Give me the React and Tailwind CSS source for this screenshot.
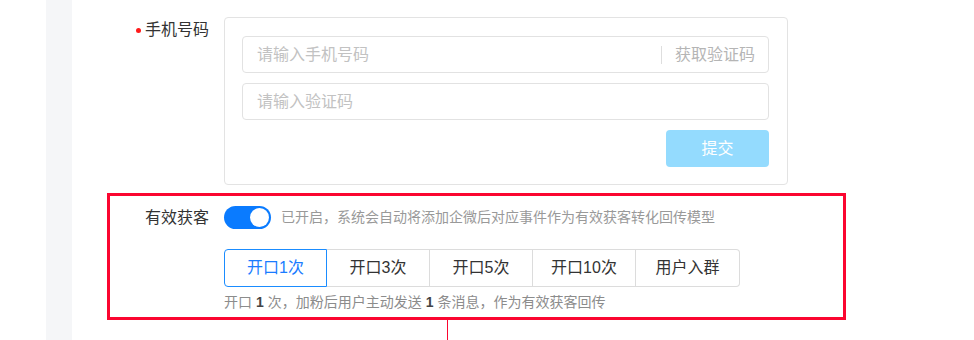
import React from "react";

const WM = "gyuliuyan".repeat(12);

function Watermark() {
  const tops = ["top-[11px]", "top-[80px]", "top-[149px]", "top-[217px]", "top-[285px]"];
  return (
    <div className="pointer-events-none absolute inset-0 overflow-hidden">
      {tops.map((t) => (
        <div
          key={t}
          className={`absolute left-0 ${t} whitespace-nowrap text-[32px] leading-[32px] text-black/[0.018] font-['Liberation_Sans',sans-serif]`}
        >
          {WM}
        </div>
      ))}
    </div>
  );
}

function Toggle() {
  return (
    <div className="flex h-[23px] w-[47px] items-center justify-end rounded-full bg-[#0a7bff] px-[2px]">
      <div className="h-[19px] w-[19px] rounded-full bg-white" />
    </div>
  );
}

const options = ["开口1次", "开口3次", "开口5次", "开口10次", "用户入群"];

export default function App() {
  return (
    <div className="relative flex h-[340px] w-[974px] overflow-hidden bg-white font-['Liberation_Sans','Noto_Sans_CJK_SC',sans-serif] text-[#333]">
      <div className="w-[46px] shrink-0" />
      <div className="w-[26px] shrink-0 bg-[#f5f6f8]" />
      <div className="flex flex-col pt-[17px]">
        {/* phone row */}
        <div className="flex">
          <div className="flex h-[26px] w-[137px] items-center justify-end gap-[4px] text-[16px]">
            <span className="h-[5px] w-[5px] rounded-full bg-[#ff1a1a]" />
            <span>手机号码</span>
          </div>
          <div className="ml-[15px] flex h-[168px] w-[564px] flex-col gap-[10px] rounded-[4px] border border-[#e3e3e3] pb-[17px] pl-[17px] pr-[18px] pt-[18px]">
            <div className="flex h-[37px] items-center rounded-[4px] border border-[#e2e2e2] pl-[14px] pr-[13px] text-[16px]">
              <span className="flex-1 text-[#c2c2c2]">请输入手机号码</span>
              <span className="h-[18px] w-px bg-[#dedede]" />
              <span className="ml-[13px] text-[#b5b5b5]">获取验证码</span>
            </div>
            <div className="flex h-[37px] items-center rounded-[4px] border border-[#e2e2e2] pl-[14px] text-[16px] text-[#c2c2c2]">
              请输入验证码
            </div>
            <div className="flex justify-end">
              <div className="flex h-[37px] w-[103px] items-center justify-center rounded-[4px] bg-[#94dbfe] text-[16px] text-white">
                提交
              </div>
            </div>
          </div>
        </div>

        {/* highlighted row */}
        <div className="ml-[35px] mt-[8px] h-[130px] w-[739px] border-[3px] border-[#fb0630] pt-[10px]">
          <div className="flex">
            <div className="flex h-[23px] w-[99px] items-center justify-end text-[16px]">有效获客</div>
            <div className="ml-[15px] flex flex-col">
              <div className="flex items-center gap-[10px]">
                <Toggle />
                <span className="text-[14px] text-[#999]">
                  已开启，系统会自动将添加企微后对应事件作为有效获客转化回传模型
                </span>
              </div>
              <div className="mt-[20px] flex h-[38px]">
                {options.map((o, i) => (
                  <div
                    key={o}
                    className={
                      i === 0
                        ? "flex w-[103px] items-center justify-center rounded-l-[4px] border border-[#1a8cff] text-[16px] text-[#1a7cff]"
                        : i === options.length - 1
                        ? "flex w-[104px] items-center justify-center rounded-r-[4px] border border-l-0 border-[#dcdcdc] text-[16px]"
                        : "flex w-[103px] items-center justify-center border border-l-0 border-[#dcdcdc] text-[16px]"
                    }
                  >
                    {o}
                  </div>
                ))}
              </div>
              <div className="mt-[5px] flex text-[14px] leading-[20px] text-[#8c8c8c]">
                <span>开口</span>
                <b className="mx-[4px] font-bold text-[#444]">1</b>
                <span>次，加粉后用户主动发送</span>
                <b className="mx-[4px] font-bold text-[#444]">1</b>
                <span>条消息，作为有效获客回传</span>
              </div>
            </div>
          </div>
        </div>
        <div className="ml-[375px] h-[20px] w-0 border-l border-[#fb0630]" />
      </div>
      <Watermark />
    </div>
  );
}
